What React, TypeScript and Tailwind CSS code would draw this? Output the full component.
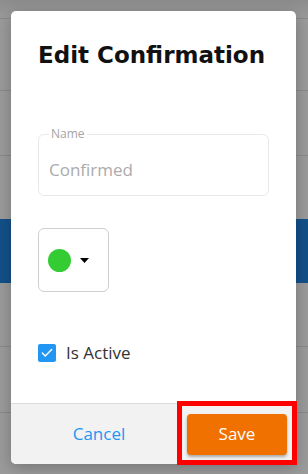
import { Check } from "lucide-react";

function Backdrop() {
  // page behind the modal, dimmed by the overlay
  return (
    <div className="absolute inset-0 flex flex-col bg-[#9b9b9b]">
      <div className="h-[18px] bg-gradient-to-b from-[#8c8c8c] to-[#9b9b9b]" />
      <div className="h-px bg-[#8a8a8a]" />
      <div className="h-[71px]" />
      <div className="h-px bg-[#8a8a8a]" />
      <div className="h-[64px]" />
      <div className="h-px bg-[#8a8a8a]" />
      <div className="h-[63px]" />
      <div className="h-[64px] bg-[#135189]" />
      <div className="h-[63px]" />
      <div className="h-px bg-[#8a8a8a]" />
      <div className="h-[65px]" />
      <div className="h-px bg-[#8a8a8a]" />
    </div>
  );
}

export default function App() {
  return (
    <div
      className="relative h-[474px] w-[308px] overflow-hidden"
      style={{ fontFamily: '"Open Sans", "Noto Sans", sans-serif' }}
    >
      <Backdrop />

      <div className="absolute left-[11px] top-[11px] flex h-[453px] w-[285px] flex-col overflow-hidden rounded-[5px] bg-white shadow-[0_4px_16px_rgba(0,0,0,0.25)]">
        <div className="flex-1 px-[27px] pt-[30px]">
          <h1 className="font-['DejaVu_Sans',sans-serif] text-[23px] font-bold leading-[28px] text-[#111]">
            Edit Confirmation
          </h1>

          <fieldset className="mt-[59px] h-[68px] rounded-[6px] border border-[#e8e8e8] px-[10px]">
            <legend className="px-[2px] text-[12px] leading-[12px] text-[#a5a5a5]">Name</legend>
            <div className="pt-[19px] text-[17px] leading-[22px] text-[#ababab]">Confirmed</div>
          </fieldset>

          <button className="mt-[32px] flex h-[64px] w-[71px] items-center gap-[9px] rounded-[6px] border border-[#cfcfcf] pl-[9px]">
            <span className="h-[23px] w-[23px] rounded-full bg-[#33cc33]" />
            <svg width="9" height="5" viewBox="0 0 9 5">
              <path d="M0 0h9L4.5 5z" fill="#000" />
            </svg>
          </button>

          <label className="mt-[48px] flex items-center gap-[10px]">
            <span className="flex h-[18px] w-[18px] items-center justify-center rounded-[2px] bg-[#2196f3]">
              <Check size={14} color="white" strokeWidth={2.5} />
            </span>
            <span className="text-[17px] text-[#333]">Is Active</span>
          </label>
        </div>

        <div className="flex h-[61px] items-center border-t border-[#dcdcdc] bg-[#f2f2f2] pr-[9px]">
          <button className="flex-1 text-[17px] text-[#2196f3]">Cancel</button>
          <button className="h-[41px] w-[100px] rounded-[4px] bg-[#f07000] text-[17px] font-medium text-white shadow-[0_2px_3px_rgba(0,0,0,0.3)]">
            Save
          </button>
        </div>
      </div>

      {/* tutorial highlight */}
      <div className="absolute left-[177px] top-[401px] h-[64px] w-[120px] border-[5px] border-[#ff0000]" />
    </div>
  );
}
